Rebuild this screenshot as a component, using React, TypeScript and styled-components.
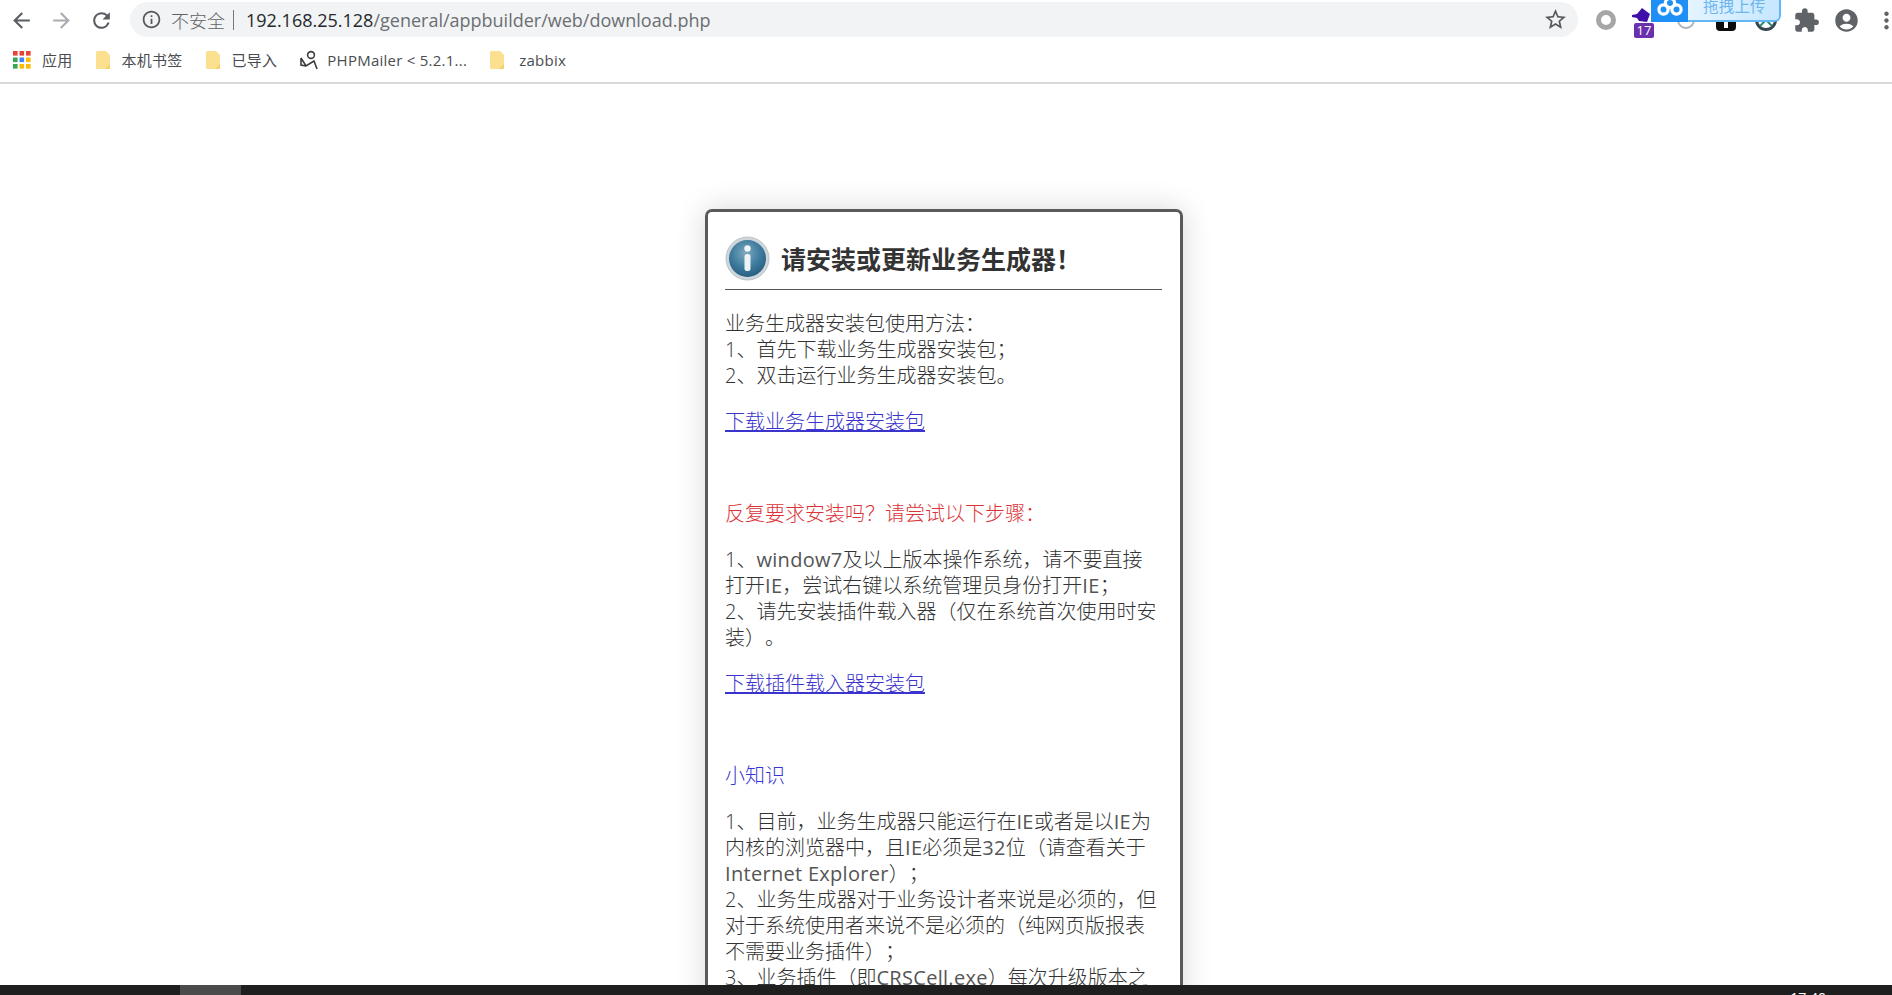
import styled, { createGlobalStyle } from "styled-components";
import {
  MdAccountCircle,
  MdArrowBack,
  MdArrowForward,
  MdExtension,
  MdInfoOutline,
  MdMoreVert,
  MdRefresh,
  MdStarBorder,
} from "react-icons/md";

const FONT = `"Open Sans", "Noto Sans CJK SC", sans-serif`;

const GlobalStyle = createGlobalStyle`
  html, body {
    margin: 0;
    padding: 0;
    background: #fff;
    font-family: ${FONT};
    text-spacing-trim: space-all;
  }
`;

const Page = styled.div`
  display: flex;
  flex-direction: column;
  width: 1892px;
  height: 995px;
  overflow: hidden;
  position: relative;
`;

const Chrome = styled.header`
  flex: none;
  height: 82px;
  border-bottom: 2px solid #d9d9d9;
  background: #fff;
`;

const Toolbar = styled.div`
  display: flex;
  align-items: center;
  height: 40px;
  padding-left: 1px;
`;

const NavButton = styled.button<{ $faded?: boolean }>`
  flex: none;
  display: flex;
  align-items: center;
  justify-content: center;
  width: 40px;
  height: 38px;
  padding: 0;
  border: 0;
  background: none;
  font-size: 25px;
  color: ${(p) => (p.$faded ? "#a9acb0" : "#5a5d61")};
`;

const AddressBar = styled.div`
  flex: none;
  display: flex;
  align-items: center;
  width: 1448px;
  height: 35px;
  margin: 0 8px 1px 9px;
  padding: 0 10px 0 11px;
  box-sizing: border-box;
  border-radius: 18px;
  background: #f1f3f4;
  color: #5f6368;
`;

const Insecure = styled.span`
  display: flex;
  align-items: center;
  gap: 9px;
  font-size: 18px;
  font-weight: 300;
  color: #5f6266;
  svg {
    font-size: 21px;
    color: #55585c;
  }
`;

const Divider = styled.span`
  width: 1px;
  height: 20px;
  margin: 0 12px 0 8px;
  background: #777;
`;

const Url = styled.span`
  flex: 1;
  font-size: 18px;
  color: #6b6e72;
  b {
    font-weight: 400;
    color: #26282b;
  }
`;

const Star = styled(MdStarBorder)`
  font-size: 25px;
  color: #55585c;
`;

const ExtensionSlot = styled.div`
  flex: none;
  display: flex;
  align-items: center;
  justify-content: center;
  position: relative;
  width: 40px;
  height: 38px;
  font-size: 27px;
  color: #5f6368;
`;

const CountBadge = styled.span`
  position: absolute;
  left: 8px;
  top: 22px;
  width: 20px;
  height: 15px;
  background: #6b30ae;
  border-radius: 2px;
  color: #fff;
  font-size: 13px;
  line-height: 15px;
  text-align: center;
`;

const UploadWidget = styled.div`
  position: absolute;
  left: 1651px;
  top: 0;
  display: flex;
  width: 130px;
  height: 22px;
  overflow: hidden;
  border-radius: 0 0 6px 0;
`;

const UploadLogo = styled.div`
  flex: none;
  display: flex;
  justify-content: center;
  width: 37px;
  background: #1e90f5;
`;

const UploadLabel = styled.div`
  flex: 1;
  box-sizing: border-box;
  padding-left: 15px;
  border: 2px solid #63b7f5;
  border-width: 0 2px 2px 0;
  border-radius: 0 0 6px 0;
  background: linear-gradient(90deg, #e4f4ff, #c6e7ff);
  color: #6fb6ef;
  font-size: 15.5px;
  line-height: 12px;
  letter-spacing: 0.2px;
`;

const BookmarkBar = styled.nav`
  display: flex;
  align-items: center;
  height: 39px;
  padding-left: 13px;
`;

const Bookmark = styled.a<{ $gap?: number }>`
  display: flex;
  align-items: center;
  gap: ${(p) => p.$gap ?? 11}px;
  margin-right: 23px;
  font-size: 15px;
  letter-spacing: 0.25px;
  color: #4a4c4f;
`;

const Main = styled.main`
  flex: 1;
  min-height: 0;
  overflow: hidden;
  padding-top: 125px;
`;

const Card = styled.section`
  box-sizing: border-box;
  width: 478px;
  margin-left: 705px;
  padding: 24px 18px 40px 17px;
  border: 3px solid #5a5a5a;
  border-radius: 7px;
  background: #fff;
  box-shadow: 0 0 30px rgba(0, 0, 0, 0.16);
  color: #333;
  font-size: 20px;
  font-weight: 300;
  line-height: 26px;
`;

const CardHeader = styled.div`
  display: flex;
  align-items: center;
  gap: 11px;
  height: 45px;
  padding-bottom: 8px;
  margin-bottom: 21px;
  border-bottom: 1px solid #555;
`;

const CardTitle = styled.h1`
  margin: 0;
  font-size: 25px;
  font-weight: 700;
  color: #333;
`;

const Paragraph = styled.p<{ $color?: string }>`
  margin: 0 0 20px;
  min-height: 26px;
  color: ${(p) => p.$color ?? "inherit"};
`;

const Latin = styled.span`
  font-weight: 400;
  letter-spacing: 0.3px;
  color: #555;
`;

const DownloadLink = styled.a`
  color: #3a34cc;
  text-decoration: underline;
`;

const Taskbar = styled.footer`
  flex: none;
  display: flex;
  height: 10px;
  overflow: hidden;
  padding-left: 180px;
  background: #1f1f1f;
  color: #fff;
  font-size: 14px;
`;

const ActiveTask = styled.span`
  width: 61px;
  background: #4b4b4b;
`;

const Clock = styled.span`
  margin-left: auto;
  margin-right: 66px;
  line-height: 26px;
`;

const AppsIcon = () => {
  const colors = ["#e94335", "#e94335", "#e94335", "#34a853", "#4285f4", "#fbbc05", "#34a853", "#fbbc05", "#fbbc05"];
  return (
    <svg width="18" height="18" viewBox="0 0 18 18">
      {colors.map((color, i) => (
        <rect key={i} x={(i % 3) * 6.5} y={Math.floor(i / 3) * 6.5} width="4.6" height="4.6" fill={color} />
      ))}
    </svg>
  );
};

const FolderIcon = () => (
  <svg width="15" height="20" viewBox="0 0 15 20">
    <path d="M1.5 1h8.5l4 4v12.5a1.5 1.5 0 0 1-1.5 1.5h-11A1.5 1.5 0 0 1 0 17.5v-15A1.5 1.5 0 0 1 1.5 1z" fill="#fbe08f" />
    <path d="M14 14v3.5a1.5 1.5 0 0 1-1.5 1.5H9z" fill="#f5cf6e" />
  </svg>
);

const MailerIcon = () => (
  <svg width="18" height="20" viewBox="0 0 18 20" fill="none" stroke="#3c3c3c" strokeWidth="1.6">
    <circle cx="11" cy="5" r="3.4" />
    <path d="M1 8l5 8 8-5 3 8M1 8v7l5 1" />
  </svg>
);

const InfoBadge = () => (
  <svg width="45" height="45" viewBox="0 0 45 45">
    <defs>
      <radialGradient id="disc" cx="45%" cy="35%" r="70%">
        <stop offset="0" stopColor="#7fa9c0" />
        <stop offset="0.55" stopColor="#3f7c9e" />
        <stop offset="1" stopColor="#245a7c" />
      </radialGradient>
    </defs>
    <circle cx="22.5" cy="22.5" r="21.5" fill="#cfd6da" stroke="#b9c2c8" />
    <circle cx="22.5" cy="22.5" r="18.5" fill="url(#disc)" />
    <circle cx="22.5" cy="12.5" r="3.2" fill="#f1f5f7" />
    <rect x="19.5" y="18" width="6" height="17" rx="2.5" fill="#eef3f6" />
  </svg>
);

const CloudLogo = () => (
  <svg width="28" height="20" viewBox="0 0 28 20" fill="none" stroke="#fff" strokeWidth="3.2">
    <circle cx="14" cy="3" r="4.6" />
    <circle cx="7.5" cy="9.5" r="4.6" />
    <circle cx="20.5" cy="9.5" r="4.6" />
  </svg>
);

const App = () => {
  return (
    <Page>
      <GlobalStyle />
      <Chrome>
        <Toolbar>
          <NavButton><MdArrowBack /></NavButton>
          <NavButton $faded><MdArrowForward /></NavButton>
          <NavButton><MdRefresh /></NavButton>
          <AddressBar>
            <Insecure>
              <MdInfoOutline />
              不安全
            </Insecure>
            <Divider />
            <Url><b>192.168.25.128</b>/general/appbuilder/web/download.php</Url>
            <Star />
          </AddressBar>
          <ExtensionSlot>
            <svg width="22" height="22" viewBox="0 0 22 22">
              <circle cx="11" cy="11" r="7.5" fill="none" stroke="#a6a6a6" strokeWidth="5" />
            </svg>
          </ExtensionSlot>
          <ExtensionSlot>
            <svg width="18" height="16" viewBox="0 0 18 16" style={{ marginLeft: -10, marginTop: -10 }}>
              <path d="M0 8l5-1 5-6 8 6-3 8-8-1-2-3-5-1z" fill="#3f10a8" />
            </svg>
            <CountBadge>17</CountBadge>
          </ExtensionSlot>
          <ExtensionSlot>
            <svg width="22" height="22" viewBox="0 0 22 22">
              <circle cx="11" cy="11" r="8" fill="none" stroke="#a9b4bd" strokeWidth="2" />
            </svg>
          </ExtensionSlot>
          <ExtensionSlot>
            <svg width="22" height="30" viewBox="0 0 22 30">
              <rect x="1" y="2" width="20" height="24" rx="4" fill="#0d0d0d" />
              <rect x="9" y="16" width="4" height="7" fill="#fff" />
            </svg>
          </ExtensionSlot>
          <ExtensionSlot>
            <svg width="24" height="24" viewBox="0 0 24 24">
              <circle cx="12" cy="12" r="9.5" fill="none" stroke="#37474f" strokeWidth="3" />
              <path d="M6 18l6-6 6 6" fill="none" stroke="#2e8b7a" strokeWidth="2" />
            </svg>
          </ExtensionSlot>
          <ExtensionSlot><MdExtension /></ExtensionSlot>
          <ExtensionSlot><MdAccountCircle /></ExtensionSlot>
          <ExtensionSlot><MdMoreVert /></ExtensionSlot>
        </Toolbar>
        <BookmarkBar>
          <Bookmark><AppsIcon />应用</Bookmark>
          <Bookmark><FolderIcon />本机书签</Bookmark>
          <Bookmark><FolderIcon />已导入</Bookmark>
          <Bookmark $gap={9}><MailerIcon />PHPMailer &lt; 5.2.1...</Bookmark>
          <Bookmark $gap={14}><FolderIcon />zabbix</Bookmark>
        </BookmarkBar>
      </Chrome>

      <UploadWidget>
        <UploadLogo><CloudLogo /></UploadLogo>
        <UploadLabel>拖拽上传</UploadLabel>
      </UploadWidget>

      <Main>
        <Card>
          <CardHeader>
            <InfoBadge />
            <CardTitle>请安装或更新业务生成器！</CardTitle>
          </CardHeader>
          <Paragraph>
            业务生成器安装包使用方法：<br />
            1、首先下载业务生成器安装包；<br />
            2、双击运行业务生成器安装包。
          </Paragraph>
          <Paragraph><DownloadLink>下载业务生成器安装包</DownloadLink></Paragraph>
          <Paragraph />
          <Paragraph $color="#dc3338">反复要求安装吗？请尝试以下步骤：</Paragraph>
          <Paragraph>
            1、<Latin>window7</Latin>及以上版本操作系统，请不要直接打开<Latin>IE</Latin>，尝试右键以系统管理员身份打开<Latin>IE</Latin>；<br />
            2、请先安装插件载入器（仅在系统首次使用时安装）。
          </Paragraph>
          <Paragraph><DownloadLink>下载插件载入器安装包</DownloadLink></Paragraph>
          <Paragraph />
          <Paragraph $color="#3636d4">小知识</Paragraph>
          <Paragraph>
            1、目前，业务生成器只能运行在<Latin>IE</Latin>或者是以<Latin>IE</Latin>为内核的浏览器中，且<Latin>IE</Latin>必须是<Latin>32</Latin>位（请查看关于<Latin>Internet Explorer</Latin>）；<br />
            2、业务生成器对于业务设计者来说是必须的，但对于系统使用者来说不是必须的（纯网页版报表不需要业务插件）；<br />
            3、业务插件（即<Latin>CRSCell.exe</Latin>）每次升级版本之
          </Paragraph>
        </Card>
      </Main>

      <Taskbar>
        <ActiveTask />
        <Clock>17:40</Clock>
      </Taskbar>
    </Page>
  );
};

export default App;
